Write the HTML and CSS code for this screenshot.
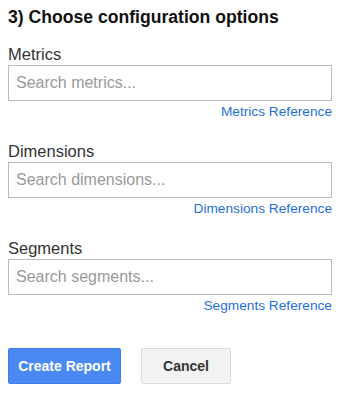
FILE: index.html
```html
<!DOCTYPE html>
<html>
<head>
<meta charset="utf-8">
<link rel="stylesheet" href="styles.css">
</head>
<body>
<div class="panel">
  <h2 class="title">3) Choose configuration options</h2>
  <div class="field">
    <label class="label">Metrics</label>
    <input class="search" type="text" placeholder="Search metrics...">
    <div class="ref"><a href="#">Metrics Reference</a></div>
  </div>
  <div class="field">
    <label class="label">Dimensions</label>
    <input class="search" type="text" placeholder="Search dimensions...">
    <div class="ref"><a href="#">Dimensions Reference</a></div>
  </div>
  <div class="field">
    <label class="label">Segments</label>
    <input class="search" type="text" placeholder="Search segments...">
    <div class="ref"><a href="#">Segments Reference</a></div>
  </div>
  <div class="actions">
    <button class="btn primary">Create Report</button>
    <button class="btn secondary">Cancel</button>
  </div>
</div>
</body>
</html>
```

FILE: styles.css
```css
html, body {
  margin: 0;
  padding: 0;
  background: #fff;
}
body {
  font-family: "Liberation Sans", Arial, sans-serif;
  color: #222;
}
.panel {
  width: 324px;
  padding: 7px 12px 0 8px;
}
.title {
  margin: 0;
  font-size: 17.6px;
  font-weight: bold;
  line-height: 20px;
  color: #111;
}
.field {
  display: flex;
  flex-direction: column;
}
.label {
  font-size: 16.5px;
  line-height: 19px;
  color: #333;
  margin-top: 18px;
  margin-bottom: 1px;
}
.field + .field .label {
  margin-top: 22px;
}
.search {
  box-sizing: border-box;
  width: 324px;
  height: 36px;
  margin: 0;
  padding: 0 7px;
  border: 1px solid #bbb;
  border-radius: 0;
  font-family: "Liberation Sans", Arial, sans-serif;
  font-size: 16px;
  color: #333;
  outline: none;
}
.search::placeholder {
  color: #999;
}
.ref {
  text-align: right;
  font-size: 13.7px;
  line-height: 16px;
  margin-top: 3px;
}
.ref a {
  color: #1f6fd9;
  text-decoration: none;
}
.actions {
  display: flex;
  gap: 20px;
  margin-top: 34px;
}
.btn {
  box-sizing: border-box;
  height: 36px;
  border-radius: 2px;
  font-family: "Liberation Sans", Arial, sans-serif;
  font-size: 14px;
  font-weight: bold;
  padding: 0;
  cursor: pointer;
}
.primary {
  width: 113px;
  background: #4a89f3;
  border: 1px solid #3f7fe8;
  color: #fff;
}
.secondary {
  width: 90px;
  background: #f2f2f2;
  border: 1px solid #dcdcdc;
  color: #333;
}
```
